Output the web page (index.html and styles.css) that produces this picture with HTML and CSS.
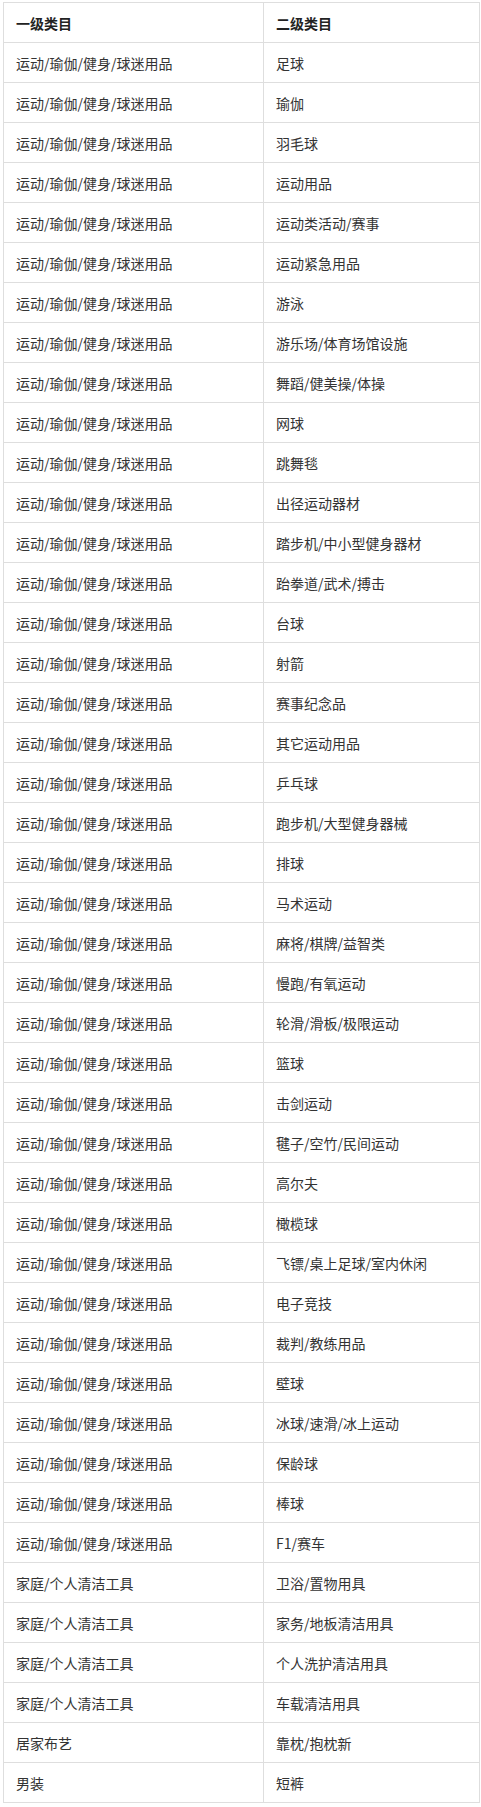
FILE: index.html
```html
<!DOCTYPE html>
<html lang="zh-CN">
<head>
<meta charset="utf-8">
<title>类目表</title>
<link rel="stylesheet" href="styles.css">
</head>
<body>
<table class="cat-table">
<thead>
<tr><th class="c1">一级类目</th><th class="c2">二级类目</th></tr>
</thead>
<tbody>
<tr><td>运动/瑜伽/健身/球迷用品</td><td>足球</td></tr>
<tr><td>运动/瑜伽/健身/球迷用品</td><td>瑜伽</td></tr>
<tr><td>运动/瑜伽/健身/球迷用品</td><td>羽毛球</td></tr>
<tr><td>运动/瑜伽/健身/球迷用品</td><td>运动用品</td></tr>
<tr><td>运动/瑜伽/健身/球迷用品</td><td>运动类活动/赛事</td></tr>
<tr><td>运动/瑜伽/健身/球迷用品</td><td>运动紧急用品</td></tr>
<tr><td>运动/瑜伽/健身/球迷用品</td><td>游泳</td></tr>
<tr><td>运动/瑜伽/健身/球迷用品</td><td>游乐场/体育场馆设施</td></tr>
<tr><td>运动/瑜伽/健身/球迷用品</td><td>舞蹈/健美操/体操</td></tr>
<tr><td>运动/瑜伽/健身/球迷用品</td><td>网球</td></tr>
<tr><td>运动/瑜伽/健身/球迷用品</td><td>跳舞毯</td></tr>
<tr><td>运动/瑜伽/健身/球迷用品</td><td>出径运动器材</td></tr>
<tr><td>运动/瑜伽/健身/球迷用品</td><td>踏步机/中小型健身器材</td></tr>
<tr><td>运动/瑜伽/健身/球迷用品</td><td>跆拳道/武术/搏击</td></tr>
<tr><td>运动/瑜伽/健身/球迷用品</td><td>台球</td></tr>
<tr><td>运动/瑜伽/健身/球迷用品</td><td>射箭</td></tr>
<tr><td>运动/瑜伽/健身/球迷用品</td><td>赛事纪念品</td></tr>
<tr><td>运动/瑜伽/健身/球迷用品</td><td>其它运动用品</td></tr>
<tr><td>运动/瑜伽/健身/球迷用品</td><td>乒乓球</td></tr>
<tr><td>运动/瑜伽/健身/球迷用品</td><td>跑步机/大型健身器械</td></tr>
<tr><td>运动/瑜伽/健身/球迷用品</td><td>排球</td></tr>
<tr><td>运动/瑜伽/健身/球迷用品</td><td>马术运动</td></tr>
<tr><td>运动/瑜伽/健身/球迷用品</td><td>麻将/棋牌/益智类</td></tr>
<tr><td>运动/瑜伽/健身/球迷用品</td><td>慢跑/有氧运动</td></tr>
<tr><td>运动/瑜伽/健身/球迷用品</td><td>轮滑/滑板/极限运动</td></tr>
<tr><td>运动/瑜伽/健身/球迷用品</td><td>篮球</td></tr>
<tr><td>运动/瑜伽/健身/球迷用品</td><td>击剑运动</td></tr>
<tr><td>运动/瑜伽/健身/球迷用品</td><td>毽子/空竹/民间运动</td></tr>
<tr><td>运动/瑜伽/健身/球迷用品</td><td>高尔夫</td></tr>
<tr><td>运动/瑜伽/健身/球迷用品</td><td>橄榄球</td></tr>
<tr><td>运动/瑜伽/健身/球迷用品</td><td>飞镖/桌上足球/室内休闲</td></tr>
<tr><td>运动/瑜伽/健身/球迷用品</td><td>电子竞技</td></tr>
<tr><td>运动/瑜伽/健身/球迷用品</td><td>裁判/教练用品</td></tr>
<tr><td>运动/瑜伽/健身/球迷用品</td><td>壁球</td></tr>
<tr><td>运动/瑜伽/健身/球迷用品</td><td>冰球/速滑/冰上运动</td></tr>
<tr><td>运动/瑜伽/健身/球迷用品</td><td>保龄球</td></tr>
<tr><td>运动/瑜伽/健身/球迷用品</td><td>棒球</td></tr>
<tr><td>运动/瑜伽/健身/球迷用品</td><td>F1/赛车</td></tr>
<tr><td>家庭/个人清洁工具</td><td>卫浴/置物用具</td></tr>
<tr><td>家庭/个人清洁工具</td><td>家务/地板清洁用具</td></tr>
<tr><td>家庭/个人清洁工具</td><td>个人洗护清洁用具</td></tr>
<tr><td>家庭/个人清洁工具</td><td>车载清洁用具</td></tr>
<tr><td>居家布艺</td><td>靠枕/抱枕新</td></tr>
<tr><td>男装</td><td>短裤</td></tr>
</tbody>
</table>
</body>
</html>
```

FILE: styles.css
```css
html, body {
  margin: 0;
  padding: 0;
  background: #ffffff;
}

body {
  font-family: "Noto Sans CJK SC", "Liberation Sans", sans-serif;
  font-size: 14px;
  color: #333333;
}

.cat-table {
  border-collapse: collapse;
  table-layout: fixed;
  width: 477px;
  margin: 2px 0 0 3px;
}

.cat-table .c1 {
  width: 260px;
}

.cat-table th,
.cat-table td {
  border: 1px solid #dedede;
  height: 40px;
  padding: 0 12px;
  box-sizing: border-box;
  text-align: left;
  vertical-align: middle;
  line-height: 20px;
  white-space: nowrap;
}

.cat-table th {
  font-weight: bold;
  color: #222222;
}
```
